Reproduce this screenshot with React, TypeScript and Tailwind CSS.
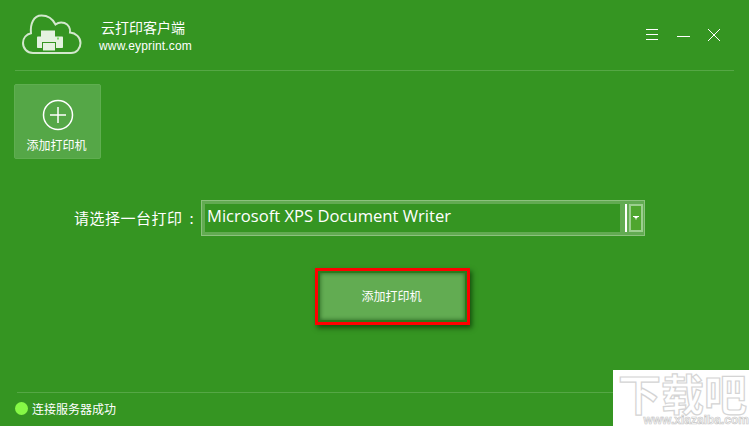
const cjk = "font-['Noto_Sans_CJK_SC','Liberation_Sans',sans-serif]";

function CloudLogo() {
  return (
    <svg width="60" height="42" viewBox="0 0 60 42" fill="none">
      <path
        d="M11 39C5 39 1 34.500 1 29C1 24 4.500 20.300 9 19.300C8 10 11.500 1.500 19.500 1.500C26 1.500 30.500 4.500 33.500 10.500C36 8.500 39.500 8 42.500 9C46.500 10.500 48.500 14.500 48 18.500C54 19 58.500 23.500 58.500 29C58.500 34.500 54.500 39 49 39Z"
        stroke="#d3e8cd"
        strokeWidth="2"
      />
      <rect x="19" y="16.500" width="14" height="6.500" fill="#e4f2e0" />
      <path d="M16 22.500H40C40.600 22.500 41 23 41 23.500V33C41 33.600 40.600 34 40 34H34V28H20V34H16C15.400 34 15 33.600 15 33V23.500C15 23 15.400 22.500 16 22.500Z" fill="#e4f2e0" />
      <rect x="21" y="29" width="12" height="7.500" fill="#e4f2e0" />
      <rect x="35" y="23.500" width="2" height="2" fill="#7fdc6a" />
    </svg>
  );
}

function WindowButtons() {
  return (
    <div className="flex items-center mt-[-1px]">
      <svg width="12" height="12" viewBox="0 0 12 12" className="mr-[19px]">
        <path d="M0 .5H12M0 5.500H12M0 10.500H12" stroke="#fff" strokeWidth="1" />
      </svg>
      <svg width="13" height="12" viewBox="0 0 13 12" className="mr-[18px]">
        <path d="M0 7.500H13" stroke="#fff" strokeWidth="1" />
      </svg>
      <svg width="12" height="12" viewBox="0 0 12 12">
        <path d="M0 0L12 12M12 0L0 12" stroke="#fff" strokeWidth="1" />
      </svg>
    </div>
  );
}

function AddCard() {
  return (
    <div className="w-[87px] h-[75px] ml-[14px] mt-[13px] bg-[#55a747] border border-[#5fae50] rounded-[2px] flex flex-col items-center pt-[14px]">
      <svg width="32" height="32" viewBox="0 0 32 32" fill="none" stroke="#fff">
        <circle cx="16" cy="16" r="14.500" strokeWidth="1.500" />
        <path d="M16 8V24M8 16H24" strokeWidth="1.500" />
      </svg>
      <span className={`${cjk} text-[12px] leading-[14px] text-white mt-[7px] mr-[2px]`}>添加打印机</span>
    </div>
  );
}

function PrinterSelect() {
  return (
    <div className="flex items-center ml-[74px] mt-[41px]">
      <span className={`${cjk} text-[15px] tracking-[0.5px] leading-[20px] text-white w-[127px] whitespace-nowrap`}>
        请选择一台打印<span className="ml-[7px]">:</span>
      </span>
      <div className="w-[444px] h-[36px] flex items-stretch border border-[#8cc27e] bg-[#62ab52] p-[3px] pr-[1px]">
        <div className="w-[416px] bg-[#359522] flex items-center pl-[2px] pb-[4px]">
          <span className="font-['Open_Sans',sans-serif] text-[16.600px] text-white whitespace-nowrap">Microsoft XPS Document Writer</span>
        </div>
        <div className="w-[2px] bg-white ml-[5px]" />
        <div className="w-[14px] ml-[2px] border-2 border-[#9ccf8f] bg-[#4fa62f] flex items-center justify-center">
          <svg width="6" height="4" viewBox="0 0 6 4">
            <path d="M0 0H6V1H4.500V2H3.500V3.500H2.500V2H1.500V1H0Z" fill="#fff" />
          </svg>
        </div>
      </div>
    </div>
  );
}

function AddButton() {
  return (
    <div className="ml-[315px] mt-[32px] w-[155px] h-[57px] border-[3px] border-[#ff0000] bg-[#2c7a1c] shadow-[2px_3px_5px_rgba(0,40,0,0.65)] p-[2px]">
      <div className="w-full h-full bg-[#62ac52] shadow-[inset_0_0_4px_rgba(0,50,0,0.6)] flex items-center justify-center pr-[2px] pb-[2px]">
        <span className={`${cjk} text-[12px] text-white`}>添加打印机</span>
      </div>
    </div>
  );
}

function Watermark() {
  return (
    <div className="absolute right-0 bottom-0 w-[136px] h-[56px] bg-white flex flex-col items-end">
      <div className={`${cjk} text-[43px] leading-[44px] font-bold text-white [-webkit-text-stroke:1.200px_#d4d4d4] whitespace-nowrap mr-[2px]`}>下载吧</div>
      <div className="font-['Liberation_Sans',sans-serif] text-[12px] leading-[12px] font-bold text-white [-webkit-text-stroke:0.700px_#c8c8c8] whitespace-nowrap">www.xiazaiba.com</div>
    </div>
  );
}

export default function App() {
  return (
    <div className="relative w-[749px] h-[426px] overflow-hidden bg-[#359522] flex flex-col">
      <header className="h-[71px] mx-[15px] border-b border-[#55a745] flex items-center pl-[7px] pr-[14px]">
        <CloudLogo />
        <div className="ml-[17px] mt-[1px] flex flex-col">
          <span className={`${cjk} text-[14px] leading-[18px] text-white ml-[2px]`}>云打印客户端</span>
          <span className="font-['Liberation_Sans',sans-serif] text-[12px] tracking-[0.15px] leading-[16px] text-white mt-[2px]">www.eyprint.com</span>
        </div>
        <div className="ml-auto">
          <WindowButtons />
        </div>
      </header>

      <AddCard />
      <PrinterSelect />
      <AddButton />

      <footer className="mt-auto h-[34px] ml-[17px] border-t border-[#55a745] flex items-center pb-[2px]">
        <span className="w-[13px] h-[13px] rounded-full bg-[#86f946] ml-[-2px]" />
        <span className={`${cjk} text-[12px] text-white ml-[4px]`}>连接服务器成功</span>
      </footer>

      <Watermark />
    </div>
  );
}
